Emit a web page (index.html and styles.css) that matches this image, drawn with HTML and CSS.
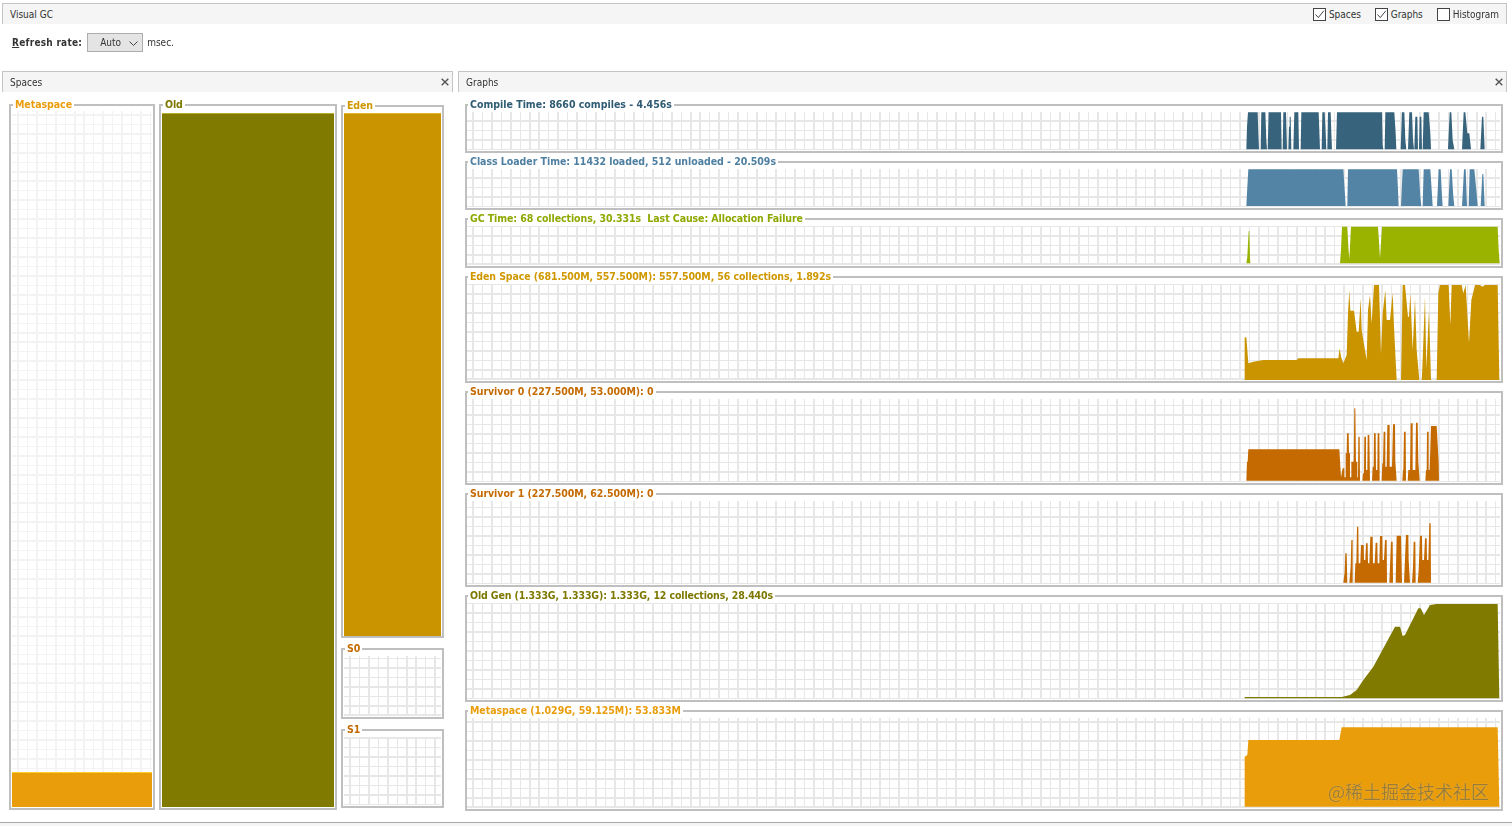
FILE: index.html
```html
<!DOCTYPE html>
<html lang="en">
<head>
<meta charset="utf-8">
<title>Visual GC</title>
<link rel="stylesheet" href="styles.css">
</head>
<body>
<div class="page">
  <header class="bar top-bar">
    <span class="bar-title">Visual GC</span>
    <div class="checks">
      <label class="check"><svg class="box-icon" viewBox="0 0 13 13"><rect x=".5" y=".5" width="12" height="12" fill="#fff" stroke="#444"/><path d="M2.5 6.5 5.3 9.6 10.8 2.8" fill="none" stroke="#444" stroke-width="1"/></svg>Spaces</label>
      <label class="check"><svg class="box-icon" viewBox="0 0 13 13"><rect x=".5" y=".5" width="12" height="12" fill="#fff" stroke="#444"/><path d="M2.5 6.5 5.3 9.6 10.8 2.8" fill="none" stroke="#444" stroke-width="1"/></svg>Graphs</label>
      <label class="check"><svg class="box-icon" viewBox="0 0 13 13"><rect x=".5" y=".5" width="12" height="12" fill="#fff" stroke="#444"/></svg>Histogram</label>
    </div>
  </header>

  <div class="refresh">
    <span class="refresh-label"><u>R</u>efresh rate:</span>
    <div class="combo"><span>Auto</span><svg class="chevron" viewBox="0 0 9 5"><path d="M.5.5 4.5 4.5 8.5.5" fill="none" stroke="#444"/></svg></div>
    <span>msec.</span>
  </div>

  <main class="panels">
    <section class="panel spaces">
      <div class="bar"><span class="bar-title">Spaces</span><svg class="close" viewBox="0 0 8 8"><path d="M.7.7 7.3 7.3M7.3.7.7 7.3" stroke="#555" stroke-width="1.4"/></svg></div>
      <div class="spaces-body">
        <fieldset class="space col-meta">
          <legend class="c-meta">Metaspace</legend>
          <div class="space-plot grid-faint"><div class="fill fill-meta"></div></div>
        </fieldset>
        <fieldset class="space col-old">
          <legend class="c-old">Old</legend>
          <div class="space-plot"><div class="fill fill-old"></div></div>
        </fieldset>
        <div class="col-young">
          <fieldset class="space eden">
            <legend class="c-eden">Eden</legend>
            <div class="space-plot"><div class="fill fill-eden"></div></div>
          </fieldset>
          <fieldset class="space s0">
            <legend class="c-surv">S0</legend>
            <div class="space-plot grid"></div>
          </fieldset>
          <fieldset class="space s1">
            <legend class="c-surv">S1</legend>
            <div class="space-plot grid"></div>
          </fieldset>
        </div>
      </div>
    </section>

    <section class="panel graphs">
      <div class="bar"><span class="bar-title">Graphs</span><svg class="close" viewBox="0 0 8 8"><path d="M.7.7 7.3 7.3M7.3.7.7 7.3" stroke="#555" stroke-width="1.4"/></svg></div>
      <div class="graphs-body">
        <fieldset class="graph">
          <legend class="c-compile">Compile Time: 8660 compiles - 4.456s</legend>
          <svg class="plot h38 grid" viewBox="-2235 336 3099 114" preserveAspectRatio="none">
            <path fill="#37647c" d="M103 448 105 380 108 337H137L139 400 141 448ZM146 448 148 337H160L163 420 165 448ZM167 448 170 337H207L209 448ZM212 448 214 337H222L225 448ZM229 448 231 380H233V350H236L238 448 241 448ZM244 448 247 337H259L261 448ZM266 448 268 337H320L324 448ZM329 448 331 337H338L341 400 343 448ZM346 448 348 337H356L358 400 360 448ZM372 448 375 337H510L512 435 514 448ZM518 448 520 337H547L551 400 553 448ZM566 448 570 337H577L580 420 583 448ZM588 448 592 337H600L603 420 606 448ZM607 448 610 350H616L618 448ZM621 448 623 350H628L630 448ZM632 448 635 337H650L655 400 657 448ZM708 448 713 337H718L722 420 727 448ZM750 448 755 337H760L766 400H772L777 448ZM805 448 810 350H814L818 448Z"/>
          </svg>
        </fieldset>
        <fieldset class="graph">
          <legend class="c-class">Class Loader Time: 11432 loaded, 512 unloaded - 20.509s</legend>
          <svg class="plot h38 grid" viewBox="-2289 57 3099 114" preserveAspectRatio="none">
            <path fill="#5384a6" d="M49 168 52 110 55 58H340L344 120 347 168ZM352 168 354 58H501L504 120 506 168ZM513 168 518 58H566L571 140 574 168H578L581 58H601L605 120 608 168ZM621 168 626 58H632L636 140 638 168ZM655 168 660 58H665L670 140 673 168ZM696 168 702 58H707L711 168H716L719 58H733L739 120 743 168ZM752 168 757 72H760L764 168Z"/>
          </svg>
        </fieldset>
        <fieldset class="graph">
          <legend class="c-gc">GC Time: 68 collections, 30.331s&nbsp; Last Cause: Allocation Failure</legend>
          <svg class="plot h39 grid" viewBox="-2289 228 3099 117" preserveAspectRatio="none">
            <path fill="#99b300" d="M49 340 52 320 56 243H58L60 320 61 340ZM330 340 333 300 336 230H352L355 290 358 328 363 230H444L448 290 450 325 456 230H803L806 300 809 340Z"/>
          </svg>
        </fieldset>
        <fieldset class="graph">
          <legend class="c-eden">Eden Space (681.500M, 557.500M): 557.500M, 56 collections, 1.892s</legend>
          <svg class="plot h96 grid" viewBox="-2289 402 3099 288" preserveAspectRatio="none">
            <path fill="#c99400" d="M44 690V562H49L55 640 70 635 100 630H200L205 625H325L329 595 333 620 340 640 350 615 354 490 358 420 361 482H372L380 545H386L392 445 395 540 405 600 410 630 414 480 420 435 425 520 432 405H447L453 612 458 490 466 420 470 510H480L488 428 492 530 500 690H513L514 640 518 405H525L534 500H537L541 430 548 600 555 445 560 600 568 690H575L577 655 585 440 589 655 597 480 603 690H620L625 430 630 405H656L661 525 665 405H695L700 430 707 405 717 578 724 450 735 405H750L757 410 765 405H803L808 690Z"/>
          </svg>
        </fieldset>
        <fieldset class="graph">
          <legend class="c-surv">Survivor 0 (227.500M, 53.000M): 0</legend>
          <svg class="plot h83 grid" viewBox="-2289 27 3099 249" preserveAspectRatio="none">
            <path fill="#c46a00" d="M49 272 51 215H53L55 178H328L333 262 338 235H343V262H347V190H350L351 130H356L357 190H360V262H364V215H371L373 55H376L378 215H382V262H384L385 140H389L390 272H397L399 250H402L403 140H408V240H412L413 135H418L420 272H426L428 230H431L432 130H437L438 240H442L443 130H448L449 272H455L457 220H459L461 125H466V230H470L472 105H479V230H486L489 103H495L496 215 500 272H517L519 240H520L522 125H527L528 272H533L535 240H540L542 100H548V240H556L558 98H563L565 215 569 272H586L588 240H590L591 125H596V240H599L603 108H620L626 215 627 272Z"/>
          </svg>
        </fieldset>
        <fieldset class="graph">
          <legend class="c-surv">Survivor 1 (227.500M, 62.500M): 0</legend>
          <svg class="plot h83 grid" viewBox="-2289 333 3099 249" preserveAspectRatio="none">
            <path fill="#c46a00" d="M340 578 344 545 346 490H350L352 578H358L362 530 364 450H368V578H374L376 520H379L381 410H385L386 520H391L393 465H401L402 510H406L408 460H413L414 520H418L421 440H428L429 520H434L437 458H442L443 520H448L450 438H457L458 510H462L465 450H470L471 578H478L480 530 483 455H488L489 578H497L500 437H513L516 578H522L528 435H535L536 510 540 578H546L549 530 551 455H556L557 578H563L566 540 570 437H576L577 510H582L585 445H590L591 510H595L598 400H602L603 578Z"/>
          </svg>
        </fieldset>
        <fieldset class="graph">
          <legend class="c-old">Old Gen (1.333G, 1.333G): 1.333G, 12 collections, 28.440s</legend>
          <svg class="plot h96 grid" viewBox="-2289 9 3099 288" preserveAspectRatio="none">
            <path fill="#807a00" d="M44 295V291H335L360 285 380 270 400 240 430 200 460 145 495 80H510L518 108 525 105 565 25H572L582 45 600 15 620 12H803L808 295Z"/>
          </svg>
        </fieldset>
        <fieldset class="graph">
          <legend class="c-meta">Metaspace (1.029G, 59.125M): 53.833M</legend>
          <svg class="plot h90 grid" viewBox="-2289 354 3099 270" preserveAspectRatio="none">
            <path fill="#ea9d0b" d="M44 620V470L52 465 55 420H328L335 382H803L808 620Z"/>
          </svg>
        </fieldset>
      </div>
    </section>
  </main>
  <span class="watermark">@稀土掘金技术社区</span>
</div>
<footer class="status"></footer>
</body>
</html>
```
FILE: styles.css
```css
* { box-sizing: border-box; }
html, body { margin: 0; height: 826px; overflow: hidden; background: #fff; }
body {
  display: flex;
  flex-direction: column;
  font: 10px "DejaVu Sans Condensed", "DejaVu Sans", sans-serif;
  font-stretch: condensed;
  color: #222;
}
.page { position: relative; flex: 1; padding: 3px 5px 0 2px; min-height: 0; filter: blur(.35px); }

.bar {
  height: 21px;
  display: flex;
  align-items: center;
  justify-content: space-between;
  background: #f5f5f5;
  border: 1px solid #c4c4c4;
  border-width: 1px 1px 0;
  padding: 0 3px 0 7px;
}
.bar-title { color: #333; }
.close { width: 8px; height: 8px; display: block; }

.checks { display: flex; gap: 14px; margin-right: 4px; }
.check { display: flex; align-items: center; gap: 3px; color: #333; letter-spacing: -.05px; }
.box-icon { width: 13px; height: 13px; display: block; }

.refresh {
  height: 47px;
  display: flex;
  align-items: center;
  padding: 0 0 10px 10px;
  gap: 4px;
  color: #333;
}
.refresh-label { font-weight: 700; margin-right: 1px; letter-spacing: .25px; }
.combo {
  width: 56px;
  height: 19px;
  display: flex;
  align-items: center;
  justify-content: space-between;
  background: #e4e4e4;
  border: 1px solid #adadad;
  padding: 0 4px 0 12px;
}
.chevron { width: 9px; height: 5px; margin-top: 2px; }

.panels { display: flex; gap: 5px; }
.spaces { width: 451px; }
.graphs { width: 1049px; }

.spaces-body { display: flex; gap: 4px; padding: 6px 0 0 7px; }
.graphs-body { display: flex; flex-direction: column; gap: 2px; padding: 6px 4px 0 7px; }

fieldset {
  margin: 0;
  min-width: 0;
  border: 2px solid #bfbfbf;
  padding: 0;
  display: block;
}
legend {
  margin-left: 1px;
  padding: 0 2px;
  height: 13px;
  line-height: 13px;
  font-weight: 700;
  font-size: 10.5px;
}
.graph { padding: 1px 1px 1px 0; }
.plot { display: block; width: 100%; }
.h38 { height: 38px; }
.h39 { height: 39px; }
.h83 { height: 83px; }
.h90 { height: 90px; }
.h96 { height: 96px; }

.grid {
  background-image:
    repeating-linear-gradient(to right, transparent 0, transparent 5.2px, #e7e7e7 5.2px, #e7e7e7 6.7px, transparent 6.7px, transparent 9.47px),
    repeating-linear-gradient(to top, #e7e7e7 0, #e7e7e7 1.5px, transparent 1.5px, transparent 9.47px);
}
.grid-faint {
  background-image:
    repeating-linear-gradient(to right, transparent 0, transparent 5.2px, #f3f3f3 5.2px, #f3f3f3 6.7px, transparent 6.7px, transparent 9.47px),
    repeating-linear-gradient(to top, #f3f3f3 0, #f3f3f3 1.5px, transparent 1.5px, transparent 9.47px);
}

.space { padding: 0 1px 1px; }
.space-plot { height: 100%; display: flex; flex-direction: column; justify-content: flex-end; }
.col-meta { width: 146px; height: 712px; }
.col-old { width: 178px; height: 712px; }
.col-meta .space-plot, .col-old .space-plot { height: 696px; }
.col-young { width: 103px; display: flex; flex-direction: column; padding-top: 1px; }
.eden { height: 539px; }
.eden .space-plot { height: 524px; }
.s0 { height: 77px; margin-top: 4px; padding-top: 1px; }
.s0 .space-plot { height: 60px; }
.s1 { height: 85px; margin-top: 4px; padding-top: 1px; }
.s1 .space-plot { height: 68px; }

.fill { flex: none; border-top: 1px solid; }
.fill-meta { height: 35px; background: #ea9d0b; border-color: #f7cf2e; }
.fill-old { height: 694px; background: #807a00; border-color: #b4ad2a; }
.fill-eden { height: 523px; background: #c99400; border-color: #e0b52a; }

.c-compile { color: #2f5b73; }
.c-class { color: #4f80a2; letter-spacing: -.04px; }
.c-gc { color: #8fa800; letter-spacing: -.08px; }
.c-eden { color: #cf9800; letter-spacing: -.1px; }
.c-surv { color: #c46a00; letter-spacing: -.06px; }
.c-old { color: #7d7800; letter-spacing: -.13px; }
.c-meta { color: #ea9d0b; letter-spacing: -.05px; }

.watermark {
  position: absolute;
  left: 1328px;
  top: 779px;
  font: 18px "Noto Sans CJK SC", sans-serif;
  line-height: 24px;
  color: rgba(140, 110, 45, .85);
  text-shadow: 0 0 1px rgba(255, 235, 170, .6);
}

.status { height: 4px; flex: none; background: #f4f4f4; border-top: 1px solid #a8a8a8; }
```
